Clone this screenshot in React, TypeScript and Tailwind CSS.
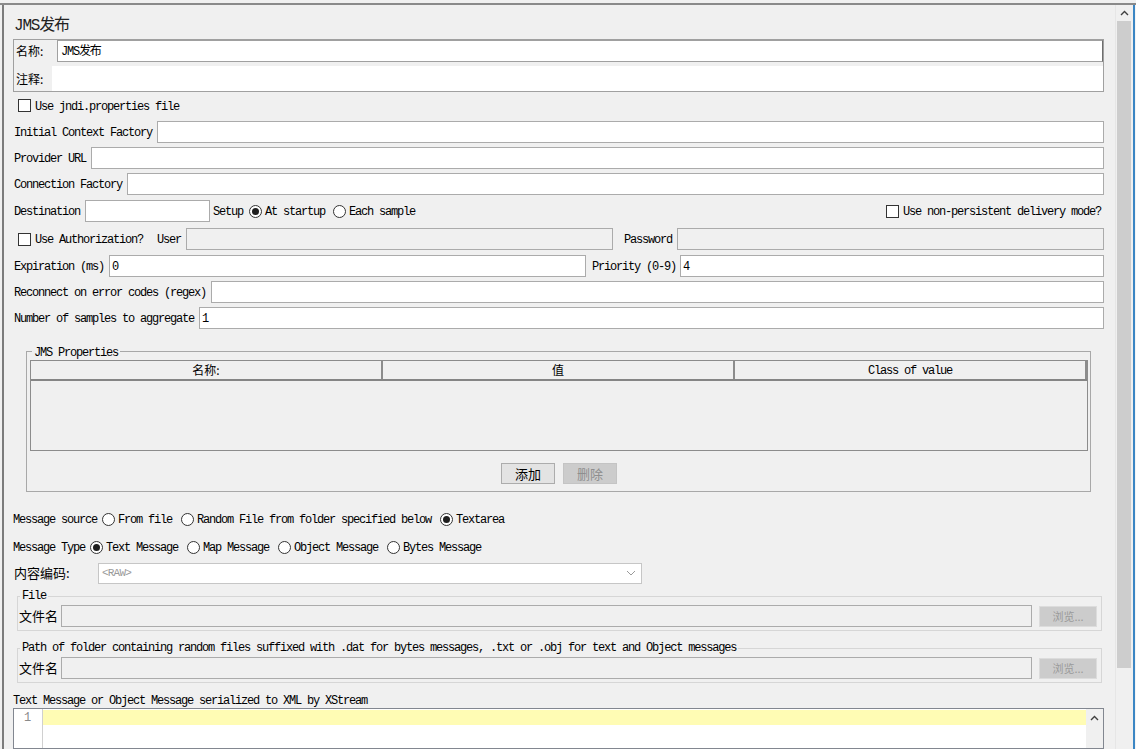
import React from "react";

const MF = "font-['Liberation_Mono','Noto_Sans_CJK_SC',monospace] whitespace-nowrap";
const M = MF + " text-[12px] tracking-[-1.2px] leading-[14px] pt-[2px]";
const C = "font-['Noto_Sans_CJK_SC',sans-serif] text-[12px] whitespace-nowrap leading-[16px]";

function Radio({ checked }: { checked?: boolean }) {
  return (
    <span className="w-[13px] h-[13px] rounded-full border border-[#333333] bg-white flex items-center justify-center shrink-0">
      {checked ? <span className="w-[7px] h-[7px] rounded-full bg-[#1e1e1e]" /> : null}
    </span>
  );
}

function Check() {
  return <span className="w-[13px] h-[13px] border border-[#333333] bg-white shrink-0" />;
}

function Field({ className = "", value, disabled }: { className?: string; value?: string; disabled?: boolean }) {
  return (
    <div
      className={
        "h-[22px] border border-[#ababab] flex items-center pl-[2px] " +
        (disabled ? "bg-[#f0f0f0] " : "bg-white ") +
        className
      }
    >
      {value ? <span className={M}>{value}</span> : null}
    </div>
  );
}

function Chevron({ className = "" }: { className?: string }) {
  return (
    <svg width="9" height="6" viewBox="0 0 9 6" className={className}>
      <polyline points="1,5 4.5,1.5 8,5" fill="none" stroke="#404040" strokeWidth="1.4" />
    </svg>
  );
}

function Row({ label, children, h = "h-[26px]" }: { label: string; children?: React.ReactNode; h?: string }) {
  return (
    <div className={h + " flex items-center pl-[10px] pr-[11px]"}>
      <span className={M}>{label}</span>
      {children}
    </div>
  );
}

function FileGroup({ title, mt, rowMt }: { title: string; mt: string; rowMt: string }) {
  return (
    <fieldset className={"ml-[13px] mr-[13px] border border-[#d6d6d6] pl-[1px] pr-[4px] pb-[3px] " + mt}>
      <legend className={MF + " text-[12px] tracking-[-1.2px] ml-[1px] px-[2px] leading-[14px]"}>{title}</legend>
      <div className={"h-[22px] flex items-center " + rowMt}>
        <span className="w-[42px] font-['Noto_Sans_CJK_SC',sans-serif] text-[13px] leading-[16px]">文件名</span>
        <Field className="flex-1" disabled />
        <div className="ml-[7px] w-[58px] h-[21px] bg-[#cccccc] border border-[#dcdcdc] flex items-center justify-center font-['Noto_Sans_CJK_SC',sans-serif] text-[11px] text-[#9a9a9a]">
          浏览...
        </div>
      </div>
    </fieldset>
  );
}

export default function App() {
  return (
    <div className="w-[1136px] h-[749px] bg-[#f0f0f0] pt-[3px] overflow-hidden text-black">
      <div className="h-[746px] flex border-t-2 border-[#8a8a8a]">
        <div className="ml-[2px] w-[1113px] border-l-2 border-[#7c7c7c] flex flex-col">
          {/* title */}
          <div className="h-[34px] pl-[10px] pt-[12px] font-['Liberation_Mono','Noto_Sans_CJK_SC',monospace] text-[16px] leading-[18px] tracking-[-1.2px] text-[#222222]">
            JMS发布
          </div>

          {/* name / comment */}
          <div className="ml-[9px] mr-[11px] h-[53px] border border-[#a0a0a0] flex flex-col">
            <div className="h-[22px] flex items-center">
              <span className={C + " w-[43px] pl-[2px]"}>名称:</span>
              <div className="flex-1 h-[22px] bg-white border border-[#a0a0a0] border-r-[#6e6e6e] flex items-center pl-[3px]">
                <span className={M}>JMS发布</span>
              </div>
            </div>
            <div className="mt-[4px] h-[25px] flex items-center">
              <span className={C + " w-[38px] pl-[2px]"}>注释:</span>
              <div className="flex-1 h-[25px] bg-white" />
            </div>
          </div>

          {/* jndi */}
          <div className="h-[27px] flex items-center pl-[14px]">
            <Check />
            <span className={M + " ml-[4px]"}>Use jndi.properties file</span>
          </div>

          <Row label="Initial Context Factory">
            <Field className="flex-1 ml-[5px]" />
          </Row>
          <Row label="Provider URL">
            <Field className="flex-1 ml-[5px]" />
          </Row>
          <Row label="Connection Factory">
            <Field className="flex-1 ml-[5px]" />
          </Row>
          <Row label="Destination" h="h-[28px]">
            <Field className="w-[125px] ml-[5px]" />
            <span className={M + " ml-[3px]"}>Setup</span>
            <span className="ml-[6px]"><Radio checked /></span>
            <span className={M + " ml-[3px]"}>At startup</span>
            <span className="ml-[8px]"><Radio /></span>
            <span className={M + " ml-[3px]"}>Each sample</span>
            <div className="flex-1" />
            <Check />
            <span className={M + " ml-[4px] mr-[3px]"}>Use non-persistent delivery mode?</span>
          </Row>
          <div className="h-[28px] flex items-center pl-[14px] pr-[11px]">
            <Check />
            <span className={M + " ml-[4px]"}>Use Authorization?</span>
            <span className={M + " ml-[14px]"}>User</span>
            <Field className="flex-1 ml-[5px]" disabled />
            <span className={M + " ml-[11px]"}>Password</span>
            <Field className="flex-1 ml-[5px]" disabled />
          </div>
          <Row label="Expiration (ms)">
            <Field className="w-[477px] ml-[5px]" value="0" />
            <span className={M + " ml-[6px]"}>Priority (0-9)</span>
            <Field className="flex-1 ml-[4px]" value="4" />
          </Row>
          <Row label="Reconnect on error codes (regex)">
            <Field className="flex-1 ml-[5px]" />
          </Row>
          <Row label="Number of samples to aggregate">
            <Field className="flex-1 ml-[5px]" value="1" />
          </Row>

          {/* JMS Properties */}
          <fieldset className="ml-[22px] mr-[24px] mt-[12px] border border-[#a8a8a8] pl-[3px] pr-[2px] pb-[7px]">
            <legend className={MF + " text-[12px] tracking-[-1.2px] ml-[2px] px-[2px] leading-[12px] pt-[4px]"}>JMS Properties</legend>
            <div className="mt-[1px] h-[91px] border border-[#8c8c8c] flex flex-col">
              <div className="h-[20px] grid grid-cols-3 border-b-2 border-b-[#858585]">
                <div className="border-r-2 border-[#8c8c8c] flex items-center justify-center">
                  <span className={C}>名称:</span>
                </div>
                <div className="border-r-2 border-[#8c8c8c] flex items-center justify-center">
                  <span className={C}>值</span>
                </div>
                <div className="border-r-2 border-[#8c8c8c] flex items-center justify-center">
                  <span className={M}>Class of value</span>
                </div>
              </div>
              <div className="flex-1" />
            </div>
            <div className="mt-[12px] flex justify-center gap-[8px]">
              <div className="w-[54px] h-[21px] bg-[#e3e3e3] border border-[#acacac] flex items-center justify-center font-['Noto_Sans_CJK_SC',sans-serif] text-[13px]">
                添加
              </div>
              <div className="w-[54px] h-[21px] bg-[#cccccc] border border-[#c4c4c4] flex items-center justify-center font-['Noto_Sans_CJK_SC',sans-serif] text-[13px] text-[#8e8e8e]">
                删除
              </div>
            </div>
          </fieldset>

          {/* message source */}
          <div className="mt-[14px] h-[26px] flex items-center pl-[9px]">
            <span className={M}>Message source</span>
            <span className="ml-[5px]"><Radio /></span>
            <span className={M + " ml-[3px]"}>From file</span>
            <span className="ml-[9px]"><Radio /></span>
            <span className={M + " ml-[3px]"}>Random File from folder specified below</span>
            <span className="ml-[9px]"><Radio checked /></span>
            <span className={M + " ml-[3px]"}>Textarea</span>
          </div>
          <div className="mt-[2px] h-[26px] flex items-center pl-[9px]">
            <span className={M}>Message Type</span>
            <span className="ml-[5px]"><Radio checked /></span>
            <span className={M + " ml-[3px]"}>Text Message</span>
            <span className="ml-[9px]"><Radio /></span>
            <span className={M + " ml-[3px]"}>Map Message</span>
            <span className="ml-[9px]"><Radio /></span>
            <span className={M + " ml-[3px]"}>Object Message</span>
            <span className="ml-[9px]"><Radio /></span>
            <span className={M + " ml-[3px]"}>Bytes Message</span>
          </div>
          <div className="h-[26px] flex items-center pl-[10px]">
            <span className="w-[84px] font-['Noto_Sans_CJK_SC',sans-serif] text-[13px] leading-[16px]">内容编码:</span>
            <div className="w-[544px] h-[21px] bg-white border border-[#c6c6c6] flex items-center pl-[3px] pr-[5px]">
              <span className={MF + " text-[11px] tracking-[-0.8px] text-[#9a9a9a]"}>&lt;RAW&gt;</span>
              <div className="flex-1" />
              <svg width="10" height="6" viewBox="0 0 10 6">
                <polyline points="1,1 5,5 9,1" fill="none" stroke="#9a9a9a" strokeWidth="1" />
              </svg>
            </div>
          </div>

          <FileGroup title="File" mt="mt-[3px]" rowMt="mt-[2px]" />
          <FileGroup
            title="Path of folder containing random files suffixed with .dat for bytes messages, .txt or .obj for text and Object messages"
            mt="mt-[10px]"
            rowMt="mt-[2px]"
          />

          <div className="mt-[9px] h-[16px] flex items-center pl-[9px]">
            <span className={M}>Text Message or Object Message serialized to XML by XStream</span>
          </div>
          <div className="ml-[9px] mr-[11px] flex-1 border border-[#828790] bg-white flex">
            <div className="w-[29px] border-r border-[#d0d0d0] bg-white pl-[10px] pt-[2px] flex flex-col">
              <span className={MF + " text-[12px] leading-[14px] text-[#8a8a8a]"}>1</span>
            </div>
            <div className="flex-1 pt-[1px]">
              <div className="h-[15px] bg-[#fffcb4]" />
            </div>
            <div className="w-[17px] bg-[#f0f0f0] flex justify-center pt-[6px]">
              <Chevron />
            </div>
          </div>
        </div>

        {/* main scrollbar */}
        <div className="w-[18px] bg-[#f0f0f0] flex flex-col border-l border-[#e6e6e6]">
          <div className="h-[16px] flex items-center justify-center">
            <Chevron />
          </div>
          <div className="ml-[1px] mr-[2px] h-[647px] bg-[#cdcdcd]" />
        </div>
        <div className="w-[2px] bg-[#3b86c4]" />
        <div className="w-[1px] bg-[#f5f5f5]" />
      </div>
    </div>
  );
}
